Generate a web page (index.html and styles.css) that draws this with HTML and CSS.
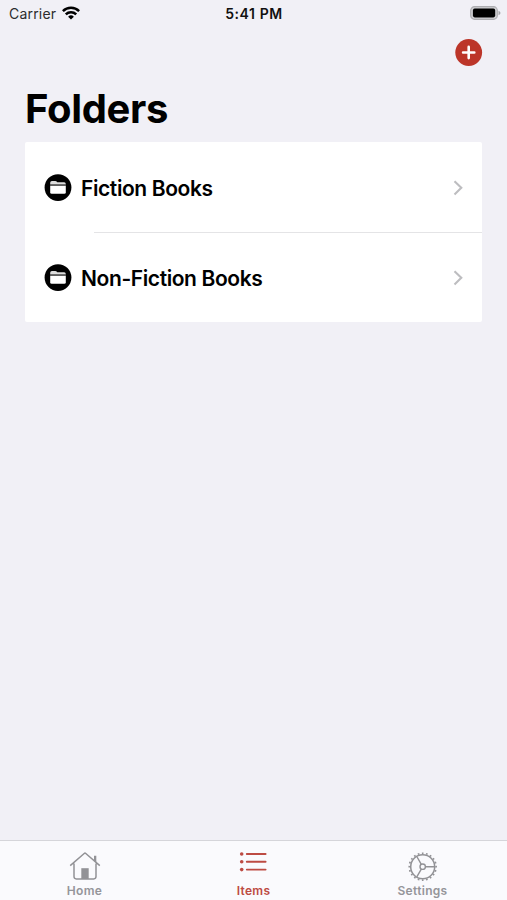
FILE: index.html
```html
<!DOCTYPE html>
<html lang="en">
<head>
<meta charset="utf-8">
<title>Folders</title>
<link rel="stylesheet" href="styles.css">
</head>
<body>
<div class="screen">
  <header class="status">
    <div class="carrier"><span>Carrier</span>
      <svg width="18" height="14" viewBox="0 0 18 14" fill="none" stroke="#000" stroke-width="2.5"><path d="M.9 5.1a11.6 11.6 0 0 1 16.2 0"/><path d="M3.8 8.3a7.4 7.4 0 0 1 10.4 0"/><path d="M9 13.6 6.1 10.7a4.1 4.1 0 0 1 5.8 0Z" fill="#000" stroke="none"/></svg>
    </div>
    <time class="clock">5:41 PM</time>
    <svg class="battery" width="31" height="14" viewBox="0 0 31 14"><rect x=".7" y=".7" width="26.6" height="12.6" rx="3.8" fill="#cfcfd2" stroke="#adadb1" stroke-width="1.2"/><rect x="2.9" y="2.6" width="22.3" height="8.8" rx="1.8" fill="#000"/><path d="M28.5 4.7q2 .7 2 2.3t-2 2.3Z" fill="#a5a5a9"/></svg>
  </header>
  <div class="toolbar">
    <button class="add" aria-label="Add folder"><svg width="28" height="28" viewBox="0 0 28 28"><circle cx="13.7" cy="14.5" r="13.4" fill="#bc3529"/><path d="M13.7 8.9v11.2M8.1 14.5h11.2" stroke="#fff" stroke-width="2.6" stroke-linecap="round"/></svg></button>
  </div>
  <h1>Folders</h1>
  <main class="list">
    <div class="row">
      <svg class="folder" width="28" height="28" viewBox="0 0 28 28"><circle cx="14" cy="13.6" r="13.4"/><path d="M6.2 10.6V8.8Q6.2 7.1 7.9 7.1h3.4q.8 0 1.3.5l.7.6h6.8q1.7 0 1.7 1.7v.7Z" fill="#ddd"/><path d="M6.2 11.8h15.6v6.5q0 1.5-1.5 1.5H7.7q-1.5 0-1.5-1.5Z" fill="#fff"/><path d="M6.2 11.2h15.6" stroke="#666" stroke-width="1.2"/></svg>
      <span class="name">Fiction Books</span>
      <svg class="chevron" width="10" height="16" viewBox="0 0 10 16"><path d="M1.5 1.2 8.3 7.8l-6.8 6.6"/></svg>
    </div>
    <div class="row">
      <svg class="folder" width="28" height="28" viewBox="0 0 28 28"><circle cx="14" cy="13.6" r="13.4"/><path d="M6.2 10.6V8.8Q6.2 7.1 7.9 7.1h3.4q.8 0 1.3.5l.7.6h6.8q1.7 0 1.7 1.7v.7Z" fill="#ddd"/><path d="M6.2 11.8h15.6v6.5q0 1.5-1.5 1.5H7.7q-1.5 0-1.5-1.5Z" fill="#fff"/><path d="M6.2 11.2h15.6" stroke="#666" stroke-width="1.2"/></svg>
      <span class="name">Non-Fiction Books</span>
      <svg class="chevron" width="10" height="16" viewBox="0 0 10 16"><path d="M1.5 1.2 8.3 7.8l-6.8 6.6"/></svg>
    </div>
  </main>
  <nav class="tabs">
    <div class="tab">
      <svg width="32" height="32" viewBox="0 0 32 32" fill="none" stroke="#929296" stroke-width="1.5"><path d="M1.2 14.6 15.2 2.5q.8-.7 1.6 0l14 12.1M5 12.4v13.2q0 2.3 2.3 2.3h17.4q2.3 0 2.3-2.3V12.4"/><path d="M25 4.8h2.3v7L25 9.6Z" fill="#929296" stroke="none"/><path d="M12.3 28V17.2h7.4V28Z" fill="#929296" stroke="none"/></svg>
      <span>Home</span>
    </div>
    <div class="tab active">
      <svg width="32" height="32" viewBox="0 0 32 32" stroke="#bd4b43" stroke-width="1.9" stroke-linecap="round"><path d="M8.8 3h18.8M8.8 10.7h18.8M8.8 18.6h18.8"/><g fill="#bd4b43" stroke="none"><circle cx="3.7" cy="3" r="1.8"/><circle cx="3.7" cy="10.7" r="1.8"/><circle cx="3.7" cy="18.6" r="1.8"/></g></svg>
      <span>Items</span>
    </div>
    <div class="tab">
      <svg width="32" height="32" viewBox="0 0 32 32" fill="none" stroke="#929296"><circle cx="15.7" cy="15.7" r="12" stroke-width="1.5"/><circle cx="15.7" cy="15.7" r="13.4" stroke-width="1.7" pathLength="80" stroke-dasharray="1.6 2.4" stroke-dashoffset=".8"/><circle cx="15.7" cy="15.7" r="2.7" stroke-width="1.4"/><path d="M18.4 15.7h9M14.3 13.3l-4.5-7.8M14.3 18.1l-4.5 7.8" stroke-width="1.4"/></svg>
      <span>Settings</span>
    </div>
  </nav>
</div>
</body>
</html>
```
FILE: styles.css
```css
* { box-sizing: border-box; }
body { margin: 0; font-family: Inter, "Liberation Sans", sans-serif; color: #000; }
svg { display: block; flex: none; }
.screen { width: 507px; height: 900px; display: flex; flex-direction: column; background: #f1f0f6; overflow: hidden; }
.status { height: 28px; display: grid; grid-template-columns: 1fr auto 1fr; align-items: center; padding: 0 6px 0 9px; font-size: 14px; line-height: 28px; }
.carrier { display: flex; align-items: center; gap: 6px; color: #2c2c2e; letter-spacing: .2px; }
.carrier svg { margin-top: -3px; }
.clock { font-weight: 600; font-size: 14px; letter-spacing: .6px; margin-left: -2px; color: #111; }
.battery { justify-self: end; margin-top: -2px; }
.toolbar { height: 52px; padding: 10px 24px 0; display: flex; justify-content: flex-end; align-items: flex-start; }
.add { padding: 0; border: 0; background: none; }
h1 { margin: 0; padding-left: 25px; height: 62px; font-size: 40px; line-height: 58px; font-weight: 700; letter-spacing: -.35px; }
.list { margin: 0 25px; height: 180px; background: #fff; border-radius: 2px; }
.row { height: 90px; display: flex; align-items: center; padding: 2px 19px 0 19px; }
.row + .row { background: linear-gradient(#e4e4e6, #e4e4e6) 69px 0 / 388px 1px no-repeat; }
.name { margin-left: 9px; padding-top: 1px; flex: 1; font-size: 21px; font-weight: 560; line-height: 30px; letter-spacing: -.4px; }
.chevron { fill: none; stroke: #bdbdc0; stroke-width: 2.1; }
.tabs { margin-top: auto; height: 60px; display: grid; grid-template-columns: repeat(3, 1fr); background: #fafafd; border-top: 1px solid #d5d5da; }
.tab { display: flex; flex-direction: column; align-items: center; padding-top: 10px; color: #95959a; font-size: 12px; font-weight: 600; line-height: 16px; letter-spacing: .3px; }
.active { color: #bd4b43; }
```
